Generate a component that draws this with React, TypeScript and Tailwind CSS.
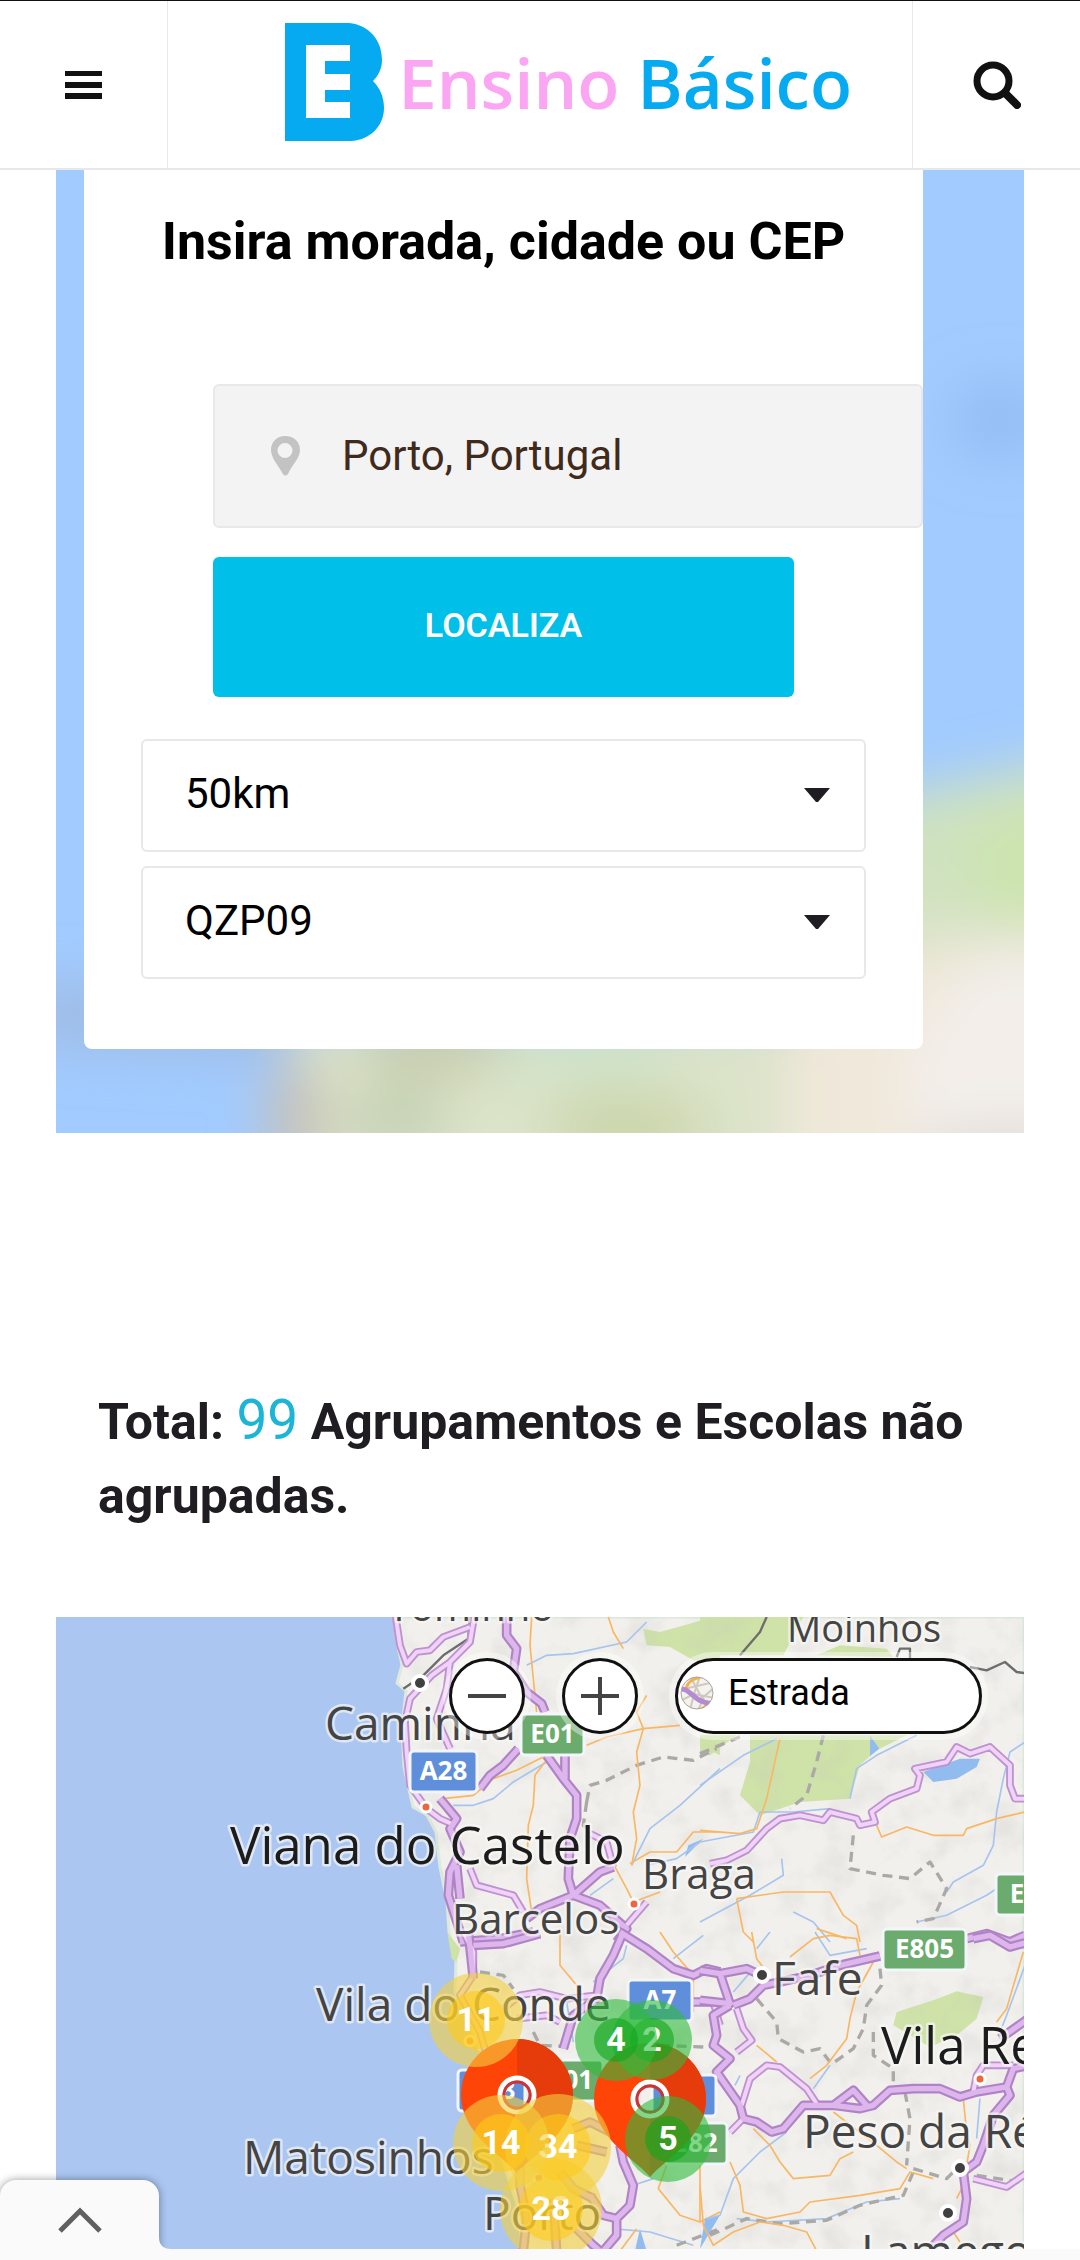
import React, { useState } from 'react';

const YELLOW = { outer: '#f4d03f', inner: '#ffc917' };
const GREEN = { outer: '#2fbb3b', inner: '#10a51a' };

// later clusters lie over the numbers of earlier ones
const clusters = [
  { label: '11', x: 420, y: 403, r: 47, inner: 29, tone: YELLOW },
  { label: '28', x: 495, y: 592, r: 51, inner: 32, tone: YELLOW },
  { label: '34', x: 502, y: 530, r: 53, inner: 33, tone: YELLOW },
  { label: '14', x: 445, y: 526, r: 48, inner: 29, tone: YELLOW },
  { label: '2', x: 596, y: 423, r: 40, inner: 22, tone: GREEN },
  { label: '4', x: 560, y: 423, r: 41, inner: 22, tone: GREEN },
  { label: '5', x: 612, y: 522, r: 43, inner: 23, tone: GREEN },
];

const pins = [
  { x: 461, y: 478 },
  { x: 594, y: 482 },
];

const shields = [
  { label: 'A28', x: 354, y: 134, w: 67, color: '#5f8fdb' },
  { label: 'E01', x: 465, y: 97, w: 63, color: '#6bab6d' },
  { label: 'A7', x: 572, y: 363, w: 64, color: '#5f8fdb' },
  { label: 'A28', x: 402, y: 453, w: 67, color: '#5f8fdb' },
  { label: 'E01', x: 483, y: 443, w: 64, color: '#6bab6d' },
  { label: 'A4', x: 596, y: 458, w: 64, color: '#5f8fdb' },
  { label: 'E82', x: 608, y: 506, w: 63, color: '#6bab6d' },
  { label: 'E805', x: 827, y: 312, w: 83, color: '#6bab6d' },
  { label: 'E', x: 940, y: 257, w: 63, color: '#6bab6d' },
];

const places = [
  { name: 'Tominho', x: 332, y: 4, size: 40 },
  { name: 'Moinhos', x: 731, y: 25, size: 38 },
  { name: 'Caminha', x: 269, y: 123, size: 46 },
  { name: 'Viana do Castelo', x: 174, y: 247, size: 51, major: true },
  { name: 'Barcelos', x: 396, y: 317, size: 42 },
  { name: 'Braga', x: 586, y: 272, size: 42 },
  { name: 'Vila do Conde', x: 260, y: 404, size: 46 },
  { name: 'Fafe', x: 716, y: 378, size: 46 },
  { name: 'Vila Real', x: 825, y: 447, size: 51, major: true },
  { name: 'Peso da Régua', x: 747, y: 531, size: 46 },
  { name: 'Matosinhos', x: 187, y: 557, size: 46 },
  { name: 'Porto', x: 427, y: 613, size: 46 },
  { name: 'Lamego', x: 805, y: 651, size: 46 },
];

// map tiles, drawn at three times the size of the map
const tiles = [
  {
    x: 304,
    y: -5,
    forest: 'M850 50L900 60L1080 10V150L1000 145L930 105L860 100ZM1080 370L1020 400L1080 430Z',
    water: 'M985 700L1030 680L1010 700L975 735Z',
    rivers:
      'M500 160L560 130L640 125L800 90L860 30M280 580L340 580L400 560L460 510L560 450M815 760L870 650L960 580L1080 470M690 850L760 800M860 760L950 740L1020 690',
    orange:
      'M515 15L510 100L520 200L530 300M555 450L525 490L520 580L505 640L500 800L515 900M745 15L760 60L790 110M860 250L830 300L850 350L830 420L840 520L820 600L830 680L815 760M680 400L740 375L850 350L960 340M810 755L870 720L950 720L1000 660L1080 660M765 765L800 830L820 870L900 840M250 560L340 550L400 500L470 475L560 430',
    roads:
      'M105 0L120 100L140 155L170 120L210 115L250 75L330 45M345 0L330 90L270 150L215 190L150 260L135 330L140 420L150 520L200 590L240 620L285 640M270 150L260 230L230 320L270 410M690 665L740 690L760 765M330 770L350 820L460 850L490 900M800 940L860 870',
    highways:
      'M440 0L440 70L470 110L460 180L500 240L545 275L555 300M475 410L430 460L390 490L360 530M615 430L615 500M560 430L610 500L650 550L650 620L630 680L625 800L640 850L540 890L500 920M240 560L290 620L270 650L300 720L270 780L265 850L310 990M290 760L300 860M640 850L720 780L760 765M640 850L720 880L800 950L770 990M300 990L420 980L520 960',
    dashed: 'M680 570L690 520L740 505L830 460L910 435L1000 445L1070 410M680 570L670 640L730 700',
    border: 'M330 0L325 80L250 130L190 190L130 230',
  },
  {
    x: 644,
    y: -5,
    forest:
      'M0 15H310L250 130H0ZM350 130L420 100L560 110L580 135ZM150 370L620 370L530 415L480 460L450 560L300 570L180 610L120 550L150 450ZM0 370H110L30 430L0 420Z',
    water: 'M670 480L780 440L840 440L830 465L770 500L700 510ZM510 370L538 410L510 432Z',
    rivers:
      'M0 520L130 430L230 380M450 560L470 470L530 430L650 370M975 390L930 420L910 500L890 600L880 700L850 760L760 810L740 840M650 930L740 910L860 850L950 790M0 690L160 660L180 600L280 600L390 590M0 930L150 850L250 790L245 740M280 900L340 930L390 990',
    orange:
      'M240 380L200 560L170 650L120 665L0 655M530 640L545 675L620 645L700 670L790 670L800 650L890 620L975 600M110 860L250 840L390 840L430 910L470 940L480 990M110 860L130 960L160 990M350 950L440 980',
    roads:
      'M30 755L80 745L140 715L200 650L240 620L300 610L370 625L390 600L470 620L480 640L525 630L515 600L570 560L650 530L660 490L645 470L740 450L770 405L810 425L870 405L930 460L930 520L945 560L985 560',
    highways: 'M800 980L860 965L930 990L975 970',
    dashed:
      'M460 670L450 770L550 790L630 800L690 750L740 830L700 920L650 930M0 425L130 370M370 370L350 450L320 550L270 590',
    border:
      'M200 15L180 60L120 130M590 135L600 110L630 110L630 140M810 165L860 175L915 150L950 180L985 185',
  },
  {
    x: 304,
    y: 315,
    forest: 'M262 0L300 50L290 90L275 80Z',
    water: 'M840 890L860 957L825 957Z',
    rivers: 'M700 150L790 80L800 40M940 80L1030 10M620 210L640 330M820 760L880 740M760 890L870 900L1000 940',
    orange:
      'M600 0L600 100L650 160L660 250M900 0L940 60L1000 130L1000 240M920 700L895 770L960 850L1020 870L1080 840M1020 700V870M830 890L780 957M340 350L400 380',
    roads:
      'M310 0L340 60L340 130L300 190L360 300L380 370M430 230L480 190L540 180L620 200L710 190M470 260L560 250L600 270M1060 210L1080 280',
    highways:
      'M340 40L430 35L540 5M325 0L340 140M790 0L760 70L720 140L710 200L640 250L610 350M780 0L860 50L940 110L1000 130L1040 110L1080 120M1000 210L1060 210L1090 225M780 640L790 690L820 760L810 820L770 860L770 910L730 957M650 890L700 940L720 957M690 790L730 850L770 860M480 640L480 760L500 860L490 957M600 720L640 770L700 800M580 800L590 957M640 590L690 570L750 600M650 640L740 660',
    dashed: 'M360 120L430 130L460 170M520 300L540 340L640 345M900 340L1030 345M950 940L1080 890',
    border: '',
  },
  {
    x: 644,
    y: 315,
    forest: 'M590 240L700 205L770 178L850 195L830 260L770 310L690 345L580 280Z',
    water: 'M0 950L15 860L60 850Z',
    rivers:
      'M345 0L390 70L500 50M340 470L390 400M20 860L60 850L100 740L180 660L260 600M110 860L200 870L380 860L500 810L600 800M975 100L920 250L900 300M840 500L830 620M120 430L105 460M170 50L210 0M100 180L160 110',
    orange:
      'M155 0L170 80L200 120M270 75L340 20L390 10L470 20L480 70M520 90L470 180L450 260L440 320L380 400L330 440M170 340L230 390M160 590L210 640L240 690L280 740L390 730L420 680L460 660M400 540L530 640L590 690L620 710M90 690L120 760L130 840L200 860L300 840L330 810L480 790L600 770L630 720L700 740M0 760L10 880L40 940L100 900L180 870L250 880L320 900L350 957M970 60L920 230L890 270M790 500L800 600L810 640L790 760L770 800M760 900L780 930',
    roads:
      'M110 230L130 290L155 325L110 360M125 520L150 440L200 400L240 405L320 470L350 515M130 560L90 600M820 480L830 430L850 400L940 400M820 740L920 765L985 720',
    highways:
      'M0 115L60 125L90 215L0 205M60 125L140 110L185 130M100 220L150 200L190 160L240 150L330 130L420 100L540 72M820 20L870 10L930 45L985 30M90 220L40 250L50 310L40 340L90 380L50 420L120 520L130 560L170 570L215 600L250 590L310 520L400 520L480 530L520 520L570 475L640 470L720 470L780 495L830 480L920 465L940 410L985 400M400 520L460 475L500 520M985 260L900 320M920 465L930 490L880 550L850 640L830 690L790 720L800 800L790 870L730 910L700 940',
    dashed:
      'M540 110L545 160L500 220L490 290L460 350L390 400M170 200L230 270L235 320L310 360L360 350L390 390M520 300L520 370L580 410L580 450M615 480L630 560L620 700M640 710L740 740L780 700M830 730L960 750M30 910L140 860L240 875L380 865L480 820L610 790L640 720',
    border: '',
  },
];

function Logo() {
  return (
    <a href="#" aria-label="Ensino Básico" className="flex items-center gap-3.5">
      <svg width="99" height="118" viewBox="0 0 99 118" aria-hidden="true">
        <path
          d="M0 0H64C84 2 97 17 97 37C97 46 93 53 88 58C95 65 99 74 99 85C99 103 85 117 66 118H0Z"
          fill="#06aaf0"
        />
        <path d="M21 22H65V38H40V51H65V67H40V79H65V95H21Z" fill="#fff" />
      </svg>
      <span className="font-['Open_Sans'] text-[69px] leading-[80px] font-semibold whitespace-nowrap text-[#06aaf0]">
        <span className="text-[#fba6f3]">Ensino</span> Básico
      </span>
    </a>
  );
}

function SelectBox({ id, label, options }: { id: string; label: string; options: string[] }) {
  return (
    <div className="relative">
      <select
        id={id}
        aria-label={label}
        className="block h-[113px] w-full appearance-none rounded-md border-2 border-[#e8e8e8] bg-white pr-24 pb-1 pl-[42px] text-[42px] leading-[50px] text-black"
      >
        {options.map((o) => (
          <option key={o}>{o}</option>
        ))}
      </select>
      <svg
        className="pointer-events-none absolute top-[49px] right-9"
        width="26"
        height="15"
        viewBox="0 0 26 15"
        aria-hidden="true"
      >
        <path d="M0 0H26L14 14H12Z" fill="#1f1d22" />
      </svg>
    </div>
  );
}

function HeroBackdrop() {
  return (
    <svg
      className="absolute inset-0 h-full w-full"
      viewBox="0 0 968 963"
      preserveAspectRatio="none"
      aria-hidden="true"
    >
      <defs>
        <filter id="soft" x="-50%" y="-50%" width="200%" height="200%">
          <feGaussianBlur stdDeviation="26" />
        </filter>
      </defs>
      <rect width="968" height="963" fill="#a2cbff" />
      <g filter="url(#soft)">
        <ellipse cx="945" cy="250" rx="50" ry="40" fill="#94bdf5" />
        <path d="M780 640L1050 580V800H780Z" fill="#cfe2c0" />
        <path d="M910 660L1050 620V760H930Z" fill="#cce4ae" />
        <path d="M230 850L760 840L860 740L1050 760V1060H230Z" fill="#dbe3c9" />
        <path d="M-30 810L230 830L240 890L-30 875Z" fill="#9fbce4" />
        <ellipse cx="240" cy="950" rx="30" ry="60" fill="#c6c0b8" />
        <ellipse cx="380" cy="875" rx="80" ry="34" fill="#c8cdae" />
        <ellipse cx="340" cy="950" rx="50" ry="40" fill="#c6d2b5" />
        <ellipse cx="530" cy="880" rx="90" ry="34" fill="#d0e3c9" />
        <ellipse cx="570" cy="960" rx="80" ry="40" fill="#ccd6ab" />
        <path d="M730 850L870 780L1050 760V1060H730Z" fill="#f0e8da" />
        <path d="M850 880L930 780L1050 800V980H850Z" fill="#f3eeea" />
        <ellipse cx="950" cy="985" rx="90" ry="20" fill="#d8d3cd" />
      </g>
    </svg>
  );
}

function RoadMap() {
  return (
    <svg
      className="block h-full w-full"
      viewBox="0 0 968 645"
      preserveAspectRatio="xMidYMin slice"
      role="img"
      aria-label="Mapa"
    >
      <defs>
        <filter id="relief" x="0" y="0" width="100%" height="100%">
          <feTurbulence type="fractalNoise" baseFrequency="0.03" numOctaves="4" seed="8" />
          <feColorMatrix values="0 0 0 0 .55  0 0 0 0 .55  0 0 0 0 .53  1.8 0 0 0 -.82" />
        </filter>
        <clipPath id="landClip">
          <path d="M346 0V110L357 190L384 250L400 345L428 445L447 545L468 645H968V0Z" />
        </clipPath>
      </defs>
      <rect width="968" height="645" fill="#abc6f1" />
      <path
        d="M338 0L342 30L346 48L341 66L350 74L346 110L348 150L357 190L371 198L380 215L384 250L391 285L393 315L400 345L399 375L418 420L428 445L440 500L447 545L462 590L468 645H968V0Z"
        fill="#f1f0ec"
        stroke="#dce9dc"
        strokeWidth="3"
      />
      {tiles.map((t, i) => (
        <g key={i} transform={`translate(${t.x} ${t.y}) scale(0.3333)`}>
          <path d={t.forest} fill="#cfe3a8" />
        </g>
      ))}
      <g clipPath="url(#landClip)">
        <rect width="968" height="645" filter="url(#relief)" opacity="0.35" />
      </g>
      {tiles.map((t, i) => (
        <g
          key={i}
          transform={`translate(${t.x} ${t.y}) scale(0.3333)`}
          fill="none"
          strokeLinejoin="round"
        >
          <path d={t.water} fill="#92bbf0" />
          <path d={t.rivers} stroke="#a6c4ee" strokeWidth="5" />
          <path d={t.dashed} stroke="#aaa9a6" strokeWidth="10" strokeDasharray="30 20" />
          <path d={t.border} stroke="#6d6d6d" strokeWidth="7" />
          <path d={t.orange} stroke="#f8b765" strokeWidth="5" />
          <path d={t.roads} stroke="#bd92cd" strokeWidth="23" />
          <path d={t.highways} stroke="#b083c4" strokeWidth="29" />
          <path d={t.roads} stroke="#f0d2fa" strokeWidth="12" />
          <path d={t.highways} stroke="#dcb6ec" strokeWidth="16" />
        </g>
      ))}

      {[[364, 66], [706, 358], [904, 551], [892, 596]].map(([x, y]) => (
        <circle key={x} cx={x} cy={y} r="7" fill="#404040" stroke="#fff" strokeWidth="4" />
      ))}
      {[[370, 190], [578, 287], [924, 462], [414, 424], [483, 561]].map(([x, y]) => (
        <circle key={x} cx={x} cy={y} r="5" fill="#e9683c" stroke="#fff" strokeWidth="3" />
      ))}

      <g className="font-['Open_Sans']" stroke="#f7f7f5" strokeWidth="5" strokeLinejoin="round" paintOrder="stroke">
        {places.map((p) => (
          <text
            key={p.name}
            x={p.x}
            y={p.y}
            fontSize={p.size}
            fill={p.major ? '#1c1c1c' : '#444'}
            strokeOpacity="0.7"
          >
            {p.name}
          </text>
        ))}
      </g>

      <g className="font-['Open_Sans'] font-bold" fontSize="26" textAnchor="middle">
        {shields.map((s, i) => (
          <g key={i}>
            <rect x={s.x} y={s.y} width={s.w} height="41" rx="4" fill={s.color} stroke="#f2f6fb" strokeWidth="3" />
            <text x={s.label === 'E' ? s.x + 21 : s.x + s.w / 2} y={s.y + 29} fill="#fff">{s.label}</text>
          </g>
        ))}
      </g>

      {pins.map((p) => (
        <g key={p.x} transform={`translate(${p.x} ${p.y})`}>
          <path
            fillRule="evenodd"
            d="M0 78C-12 62 -56 40 -56 0A56 56 0 0 1 56 0C56 40 12 62 0 78ZM0 -14A14 14 0 1 0 0 14A14 14 0 1 0 0 -14Z"
            fill="#ff4408"
          />
          <path d="M0 -56A56 56 0 0 1 56 0C56 40 12 62 0 78V14A14 14 0 0 0 0 -14Z" fill="#e63b0b" />
          <circle r="17" fill="none" stroke="#fff" strokeWidth="5" />
          <circle r="13" fill="none" stroke="#c9343a" strokeWidth="3" />
        </g>
      ))}

      <g className="font-['Roboto'] font-bold" fontSize="34" textAnchor="middle">
        {clusters.map((c) => (
          <g key={c.label}>
            <circle cx={c.x} cy={c.y} r={c.r} fill={c.tone.outer} fillOpacity="0.6" />
            <circle cx={c.x} cy={c.y} r={c.inner} fill={c.tone.inner} fillOpacity="0.6" />
            <text x={c.x} y={c.y + 11} fill="#fff">{c.label}</text>
          </g>
        ))}
      </g>
    </svg>
  );
}

function RoadIcon() {
  return (
    <svg width="34" height="34" viewBox="0 0 34 34" aria-hidden="true">
      <clipPath id="disc">
        <circle cx="17" cy="17" r="16" />
      </clipPath>
      <g clipPath="url(#disc)" fill="none">
        <rect width="34" height="34" fill="#f4f2ee" />
        <path d="M0 14L34 6M10 0L24 26M20 0L14 18L34 22M34 12L22 22M2 24L14 18L10 34M18 34L24 22" stroke="#cfc9bd" strokeWidth="2" />
        <path d="M6 12C9 4 14 3 20 1M20 34L32 26" stroke="#f2b04e" strokeWidth="3" />
        <path d="M0 13C12 12 12 27 34 28" stroke="#b48bd0" strokeWidth="5" />
      </g>
      <circle cx="17" cy="17" r="16" fill="none" stroke="#aaa39a" />
    </svg>
  );
}

export default function App() {
  const [address, setAddress] = useState('Porto, Portugal');
  const round =
    'flex size-[76px] items-center justify-center rounded-full border-[3px] border-[#111] bg-white ring-[6px] ring-white/40';

  return (
    <div className="min-h-screen bg-white font-['Roboto',sans-serif]">
      <header className="grid h-[170px] grid-cols-[168px_1fr_168px] border-t border-b-2 border-t-[#111] border-b-[#e8e8e8]">
        <button aria-label="Menu" className="flex items-center justify-center border-r border-[#e8e8e8]">
          <svg width="37" height="28" viewBox="0 0 37 28" aria-hidden="true">
            <path d="M0 0H37V5H0ZM0 11H37V17H0ZM0 22H37V28H0Z" fill="#111" />
          </svg>
        </button>
        <div className="flex items-center justify-end pr-[60px] pb-1.5">
          <Logo />
        </div>
        <button aria-label="Pesquisar" className="flex items-center justify-center border-l border-[#e8e8e8]">
          <svg width="48" height="48" viewBox="0 0 48 48" fill="none" stroke="#111" aria-hidden="true">
            <circle cx="20" cy="20" r="16" strokeWidth="7" />
            <path d="M32 32L44 44" strokeWidth="8" strokeLinecap="round" />
          </svg>
        </button>
      </header>

      <main className="px-14">
        <section className="relative overflow-hidden pr-[101px] pb-[84px] pl-7">
          <HeroBackdrop />
          <form
            className="relative rounded-b-lg bg-white px-[57px] pt-10 pb-[70px]"
            onSubmit={(e) => e.preventDefault()}
          >
            <h1 className="text-center text-[52px] leading-[64px] font-bold whitespace-nowrap text-black">
              Insira morada, cidade ou CEP
            </h1>
            <div className="-mr-[57px] mt-[110px] ml-[72px] flex h-36 items-center gap-[42px] rounded-md border-2 border-[#e8e8e8] bg-[#f3f3f3] pl-14">
              <label htmlFor="address" aria-label="Morada" className="shrink-0">
                <svg width="29" height="40" viewBox="0 0 29 40" aria-hidden="true">
                  <path
                    fillRule="evenodd"
                    d="M14 0C6 0 0 6 0 14C0 22 7 29 12 38Q14 41 17 38C21 29 29 22 29 14C29 6 23 0 14 0ZM14 7A7 7 0 1 1 14 22A7 7 0 1 1 14 7Z"
                    fill="#c3c3c4"
                  />
                </svg>
              </label>
              <input
                id="address"
                type="text"
                value={address}
                onChange={(e) => setAddress(e.target.value)}
                className="w-full bg-transparent text-[42px] leading-[50px] text-[#3f2a1b] outline-none"
              />
            </div>
            <button
              type="submit"
              className="mx-[72px] mt-[29px] block h-[140px] w-[calc(100%-144px)] rounded-md bg-[#00bfe8] pb-1 text-[34px] font-semibold text-white"
            >
              LOCALIZA
            </button>
            <div className="mt-[42px] flex flex-col gap-3.5">
              <SelectBox id="radius" label="Raio" options={['50km', '100km', '200km']} />
              <SelectBox id="zone" label="Zona" options={['QZP09', 'QZP01', 'QZP02']} />
            </div>
          </form>
        </section>

        <h2 className="mt-[250px] px-[42px] text-[50px] leading-[74px] font-bold text-[#1f1d22]">
          Total: <span className="text-[55px] font-normal text-[#1cb5d5]">99</span> Agrupamentos e Escolas não
          agrupadas.
        </h2>

        <section className="relative mt-[84px] h-[645px] overflow-hidden">
          <RoadMap />
          <div className="absolute top-[41px] right-[42px] flex items-center gap-[37px]">
            <button aria-label="Reduzir" className={round}>
              <svg width="38" height="38" viewBox="0 0 38 38" aria-hidden="true">
                <path d="M0 19H38" stroke="#444" strokeWidth="4" />
              </svg>
            </button>
            <button aria-label="Ampliar" className={round}>
              <svg width="38" height="38" viewBox="0 0 38 38" aria-hidden="true">
                <path d="M0 19H38M19 0V38" stroke="#444" strokeWidth="4" />
              </svg>
            </button>
            <button className="flex h-[76px] w-[307px] items-center gap-3.5 rounded-full border-[3px] border-[#111] bg-white pb-1.5 pl-0.5 text-[36px] text-black ring-[6px] ring-white/40">
              <RoadIcon />
              Estrada
            </button>
          </div>
        </section>
      </main>

      <footer className="fixed inset-x-0 bottom-0 h-[11px] bg-[#fafafa]">
        <button
          aria-label="Abrir"
          className="absolute bottom-0 left-0 flex h-20 w-[159px] items-center justify-center rounded-t-2xl bg-[#fafafa] shadow-[0_0_8px_rgba(0,0,0,0.4)]"
        >
          <svg width="44" height="26" viewBox="0 0 44 26" fill="none" aria-hidden="true">
            <path d="M2 24L22 4L42 24" stroke="#606060" strokeWidth="5" />
          </svg>
        </button>
        <div className="absolute inset-0 bg-[#fafafa]" />
        <svg className="absolute bottom-[11px] left-[159px]" width="12" height="12" viewBox="0 0 12 12" aria-hidden="true">
          <path d="M0 0Q0 12 12 12H0Z" fill="#fafafa" />
        </svg>
      </footer>
    </div>
  );
}
